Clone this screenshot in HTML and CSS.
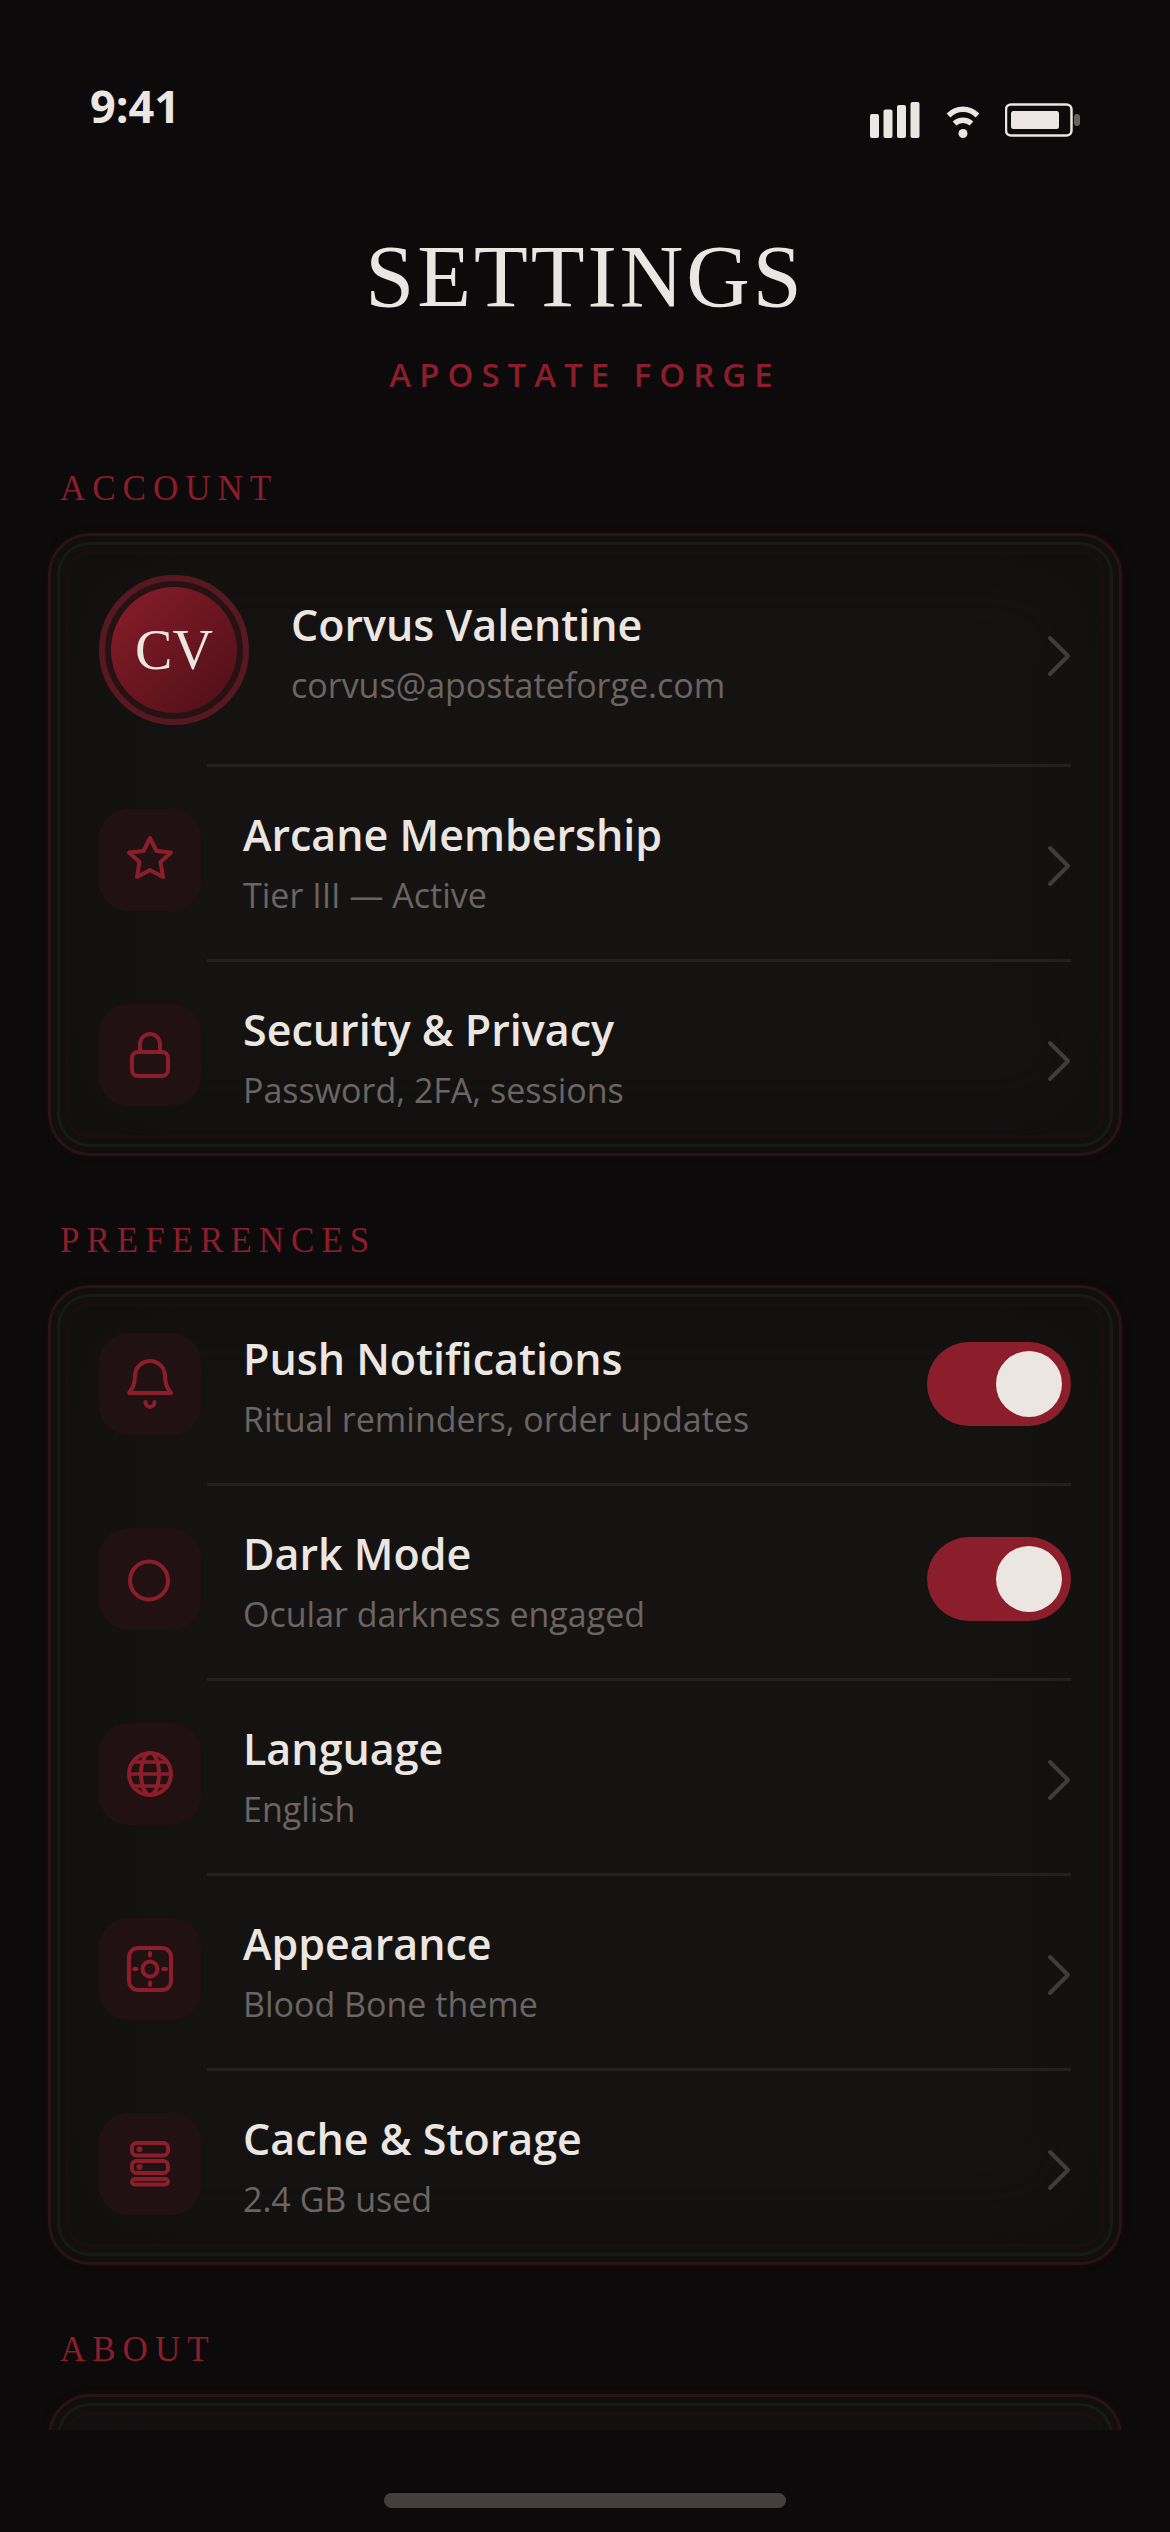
FILE: index.html
```html
<!DOCTYPE html>
<html lang="en">
<head>
<meta charset="utf-8">
<meta name="viewport" content="width=device-width, initial-scale=1">
<title>Settings</title>
<link rel="stylesheet" href="styles.css">
</head>
<body>
<div class="status-bar">
  <span class="status-time">9:41</span>
  <div class="status-icons">
    <svg width="51" height="36" viewBox="0 0 51 36" fill="currentColor" aria-hidden="true">
      <rect x="0" y="12" width="9" height="24" rx="2"/>
      <rect x="13.5" y="7.5" width="9" height="28.5" rx="2"/>
      <rect x="27" y="3" width="9" height="33" rx="2"/>
      <rect x="40.5" y="0" width="9" height="36" rx="2"/>
    </svg>
    <svg width="36" height="36" viewBox="0 0 36 36" aria-hidden="true">
      <path d="M3.5 13.5C12 5.3 24 5.3 32.500 13.500M9.500 21.500C14.500 17 21.500 17 26.500 21.500" fill="none" stroke="currentColor" stroke-width="5.500"/>
      <circle cx="18" cy="31.500" r="4.500" fill="currentColor"/>
    </svg>
    <svg width="75" height="36" viewBox="0 0 75 36" aria-hidden="true">
      <rect x="1" y="2.500" width="65.500" height="31" rx="5" fill="none" stroke="currentColor" stroke-width="2.500"/>
      <rect x="6" y="9" width="48" height="18" rx="2.500" fill="currentColor"/>
      <rect x="69" y="12" width="6" height="12" rx="3" fill="currentColor" opacity=".4"/>
    </svg>
  </div>
</div>

<main class="content">
  <header class="page-header">
    <h1 class="page-title">SETTINGS</h1>
    <p class="page-brand">APOSTATE FORGE</p>
  </header>

  <section class="section">
    <h2 class="section-label">ACCOUNT</h2>
    <div class="card">
      <a class="row row-profile" href="#profile">
        <span class="avatar">CV</span>
        <span class="row-text"><span class="row-title">Corvus Valentine</span><span class="row-sub">corvus@apostateforge.com</span></span>
        <svg class="chevron" viewBox="0 0 24 54" aria-hidden="true"><path d="M3 15l18 18-18 18"/></svg>
      </a>
      <a class="row" href="#membership">
        <span class="tile"><svg class="icon" viewBox="0 0 54 54" aria-hidden="true"><path d="M27 5l6.500 13L48 19.500 37.500 29 40 44l-13-7-13 7 2.500-15L6 19.500 20.500 18z"/></svg></span>
        <span class="row-text"><span class="row-title">Arcane Membership</span><span class="row-sub">Tier III — Active</span></span>
        <svg class="chevron" viewBox="0 0 24 54" aria-hidden="true"><path d="M3 15l18 18-18 18"/></svg>
      </a>
      <a class="row" href="#security">
        <span class="tile"><svg class="icon" viewBox="0 0 54 54" aria-hidden="true"><rect x="9" y="24" width="36" height="24" rx="6"/><path d="M17 24v-8a10 10 0 0 1 20 0v8"/></svg></span>
        <span class="row-text"><span class="row-title">Security &amp; Privacy</span><span class="row-sub">Password, 2FA, sessions</span></span>
        <svg class="chevron" viewBox="0 0 24 54" aria-hidden="true"><path d="M3 15l18 18-18 18"/></svg>
      </a>
    </div>
  </section>

  <section class="section">
    <h2 class="section-label">PREFERENCES</h2>
    <div class="card">
      <label class="row">
        <span class="tile"><svg class="icon" viewBox="0 0 54 54" aria-hidden="true"><path d="M27 4a15 15 0 0 0-15 15c0 9-3 13-6 17h42c-3-4-6-8-6-17a15 15 0 0 0-15-15z"/><path d="M22.500 45a4.500 5 0 0 0 9 0"/></svg></span>
        <span class="row-text"><span class="row-title">Push Notifications</span><span class="row-sub">Ritual reminders, order updates</span></span>
        <input class="toggle" type="checkbox" role="switch" checked>
      </label>
      <label class="row">
        <span class="tile"><svg class="icon" viewBox="0 0 54 54" aria-hidden="true"><circle cx="26" cy="28.500" r="19"/></svg></span>
        <span class="row-text"><span class="row-title">Dark Mode</span><span class="row-sub">Ocular darkness engaged</span></span>
        <input class="toggle" type="checkbox" role="switch" checked>
      </label>
      <a class="row" href="#language">
        <span class="tile"><svg class="icon" viewBox="0 0 54 54" aria-hidden="true"><circle cx="27" cy="27" r="21"/><ellipse cx="27" cy="27" rx="9" ry="21"/><path d="M6 27h42M10 15h34M10 39h34" stroke-width="3.500"/></svg></span>
        <span class="row-text"><span class="row-title">Language</span><span class="row-sub">English</span></span>
        <svg class="chevron" viewBox="0 0 24 54" aria-hidden="true"><path d="M3 15l18 18-18 18"/></svg>
      </a>
      <a class="row" href="#appearance">
        <span class="tile"><svg class="icon" viewBox="0 0 54 54" aria-hidden="true"><rect x="6" y="6" width="42" height="42" rx="9"/><circle cx="27" cy="27" r="7.500"/><path d="M27 11v2.500M27 40.500V43M11 27h2.500M40.500 27H43"/></svg></span>
        <span class="row-text"><span class="row-title">Appearance</span><span class="row-sub">Blood Bone theme</span></span>
        <svg class="chevron" viewBox="0 0 24 54" aria-hidden="true"><path d="M3 15l18 18-18 18"/></svg>
      </a>
      <a class="row" href="#storage">
        <span class="tile"><svg class="icon" viewBox="0 0 54 54" aria-hidden="true"><rect x="9" y="6" width="36" height="12.500" rx="4.500"/><rect x="9" y="24" width="36" height="12" rx="4.500"/><rect x="9" y="42" width="36" height="5.500" rx="2.700"/><circle class="dot" cx="16.500" cy="12.300" r="3"/><circle class="dot" cx="16.500" cy="30" r="3"/></svg></span>
        <span class="row-text"><span class="row-title">Cache &amp; Storage</span><span class="row-sub">2.4 GB used</span></span>
        <svg class="chevron" viewBox="0 0 24 54" aria-hidden="true"><path d="M3 15l18 18-18 18"/></svg>
      </a>
    </div>
  </section>

  <section class="section">
    <h2 class="section-label">ABOUT</h2>
    <div class="card card-about"></div>
  </section>
</main>

<div class="home-area"><div class="home-bar"></div></div>
</body>
</html>
```

FILE: styles.css
```css
:root {
  --bg: #0c0a0b;
  --bone: #ece6e2;
  --blood: #8b1e2a;
  --muted: #6b6463;
  --sans: "Segoe UI", "Open Sans", "Noto Sans", sans-serif;
  --serif: "Palatino Linotype", "Liberation Serif", serif;
}

* { box-sizing: border-box; }

body {
  display: flex;
  flex-direction: column;
  height: 100vh;
  margin: 0;
  background: var(--bg);
  color: var(--bone);
  font-family: var(--sans);
}

.status-bar {
  display: flex;
  flex: none;
  justify-content: space-between;
  min-height: 138px;
  padding: 76px 90px 0;
}

.status-time {
  font-size: 45px;
  font-weight: 700;
  line-height: 60px;
}

.status-icons {
  display: flex;
  align-items: flex-end;
  gap: 24px;
}

.status-icons svg { display: block; }

.content {
  flex: 1;
  min-height: 0;
  overflow: hidden;
  padding: 0 48px;
}

.page-header {
  padding: 91px 0 5px;
  text-align: center;
}

.page-title {
  margin: 0 0 26px;
  font-family: var(--serif);
  font-size: 88px;
  font-weight: 400;
  line-height: 96px;
  letter-spacing: 3px;
}

.page-brand {
  margin: 0;
  color: var(--blood);
  font-size: 33px;
  font-weight: 600;
  line-height: 48px;
  letter-spacing: 8px;
}

.section { padding-top: 60px; }

.section-label {
  margin: 0 0 20px;
  padding: 1px 12px 0;
  color: var(--blood);
  font-family: var(--serif);
  font-size: 35px;
  font-weight: 400;
  line-height: 48px;
  letter-spacing: 7px;
}

.card {
  padding: 3px 0 0;
  border: 3px solid #2a1217;
  border-radius: 42px;
  background: #141311;
  box-shadow:
    0 0 6px #1c0b0f,
    inset 0 0 0 6px #100f0e,
    inset 0 0 0 9px #191918,
    inset 0 0 0 15px #11100f,
    inset 0 0 0 18px #1b0e10,
    inset 0 0 90px 18px #110f10;
}

.card-about { min-height: 234px; }

.row {
  display: flex;
  align-items: center;
  gap: 42px;
  padding: 34px 48px 43px;
  background: linear-gradient(#222120, #222120) right 48px bottom 0 / calc(100% - 204px) 3px no-repeat;
  color: inherit;
  text-decoration: none;
}

.row-profile {
  padding-top: 36px;
  padding-bottom: 42px;
}

.row:last-child {
  padding-bottom: 39px;
  background: none;
}

.avatar {
  display: flex;
  flex: none;
  align-items: center;
  justify-content: center;
  width: 150px;
  height: 150px;
  border: 6px solid #58181f;
  border-radius: 50%;
  background: linear-gradient(135deg, #8b1e2a, #4a0e16) padding-box;
  box-shadow: inset 0 0 0 6px #261114;
  font-family: var(--serif);
  font-size: 56px;
  line-height: 60px;
}

.tile {
  display: flex;
  flex: none;
  align-items: center;
  justify-content: center;
  width: 102px;
  height: 102px;
  border-radius: 30px;
  background: #221113;
}

.icon {
  width: 54px;
  height: 54px;
  fill: none;
  stroke: var(--blood);
  stroke-width: 4;
  stroke-linecap: round;
  stroke-linejoin: round;
}

.dot {
  fill: var(--blood);
  stroke: none;
}

.row-text {
  display: flex;
  flex: 1;
  flex-direction: column;
  gap: 6px;
  min-width: 0;
  padding-top: 4px;
}

.row-title {
  font-size: 43px;
  font-weight: 600;
  line-height: 60px;
}

.row-sub {
  color: var(--muted);
  font-size: 34px;
  line-height: 48px;
}

.chevron {
  flex: none;
  width: 24px;
  height: 54px;
  fill: none;
  stroke: #403c3b;
  stroke-width: 4;
  stroke-linecap: round;
  stroke-linejoin: round;
}

.toggle {
  display: flex;
  flex: none;
  width: 144px;
  height: 84px;
  margin: 0;
  padding: 9px;
  border-radius: 42px;
  background: #2a2524;
  appearance: none;
}

.toggle::before {
  width: 66px;
  height: 66px;
  border-radius: 50%;
  background: var(--bone);
  content: "";
}

.toggle:checked {
  justify-content: flex-end;
  background: var(--blood);
}

.home-area {
  display: flex;
  flex: none;
  align-items: flex-end;
  justify-content: center;
  height: 102px;
  padding-bottom: 24px;
}

.home-bar {
  width: 402px;
  height: 15px;
  border-radius: 8px;
  background: #443f3e;
}
```
